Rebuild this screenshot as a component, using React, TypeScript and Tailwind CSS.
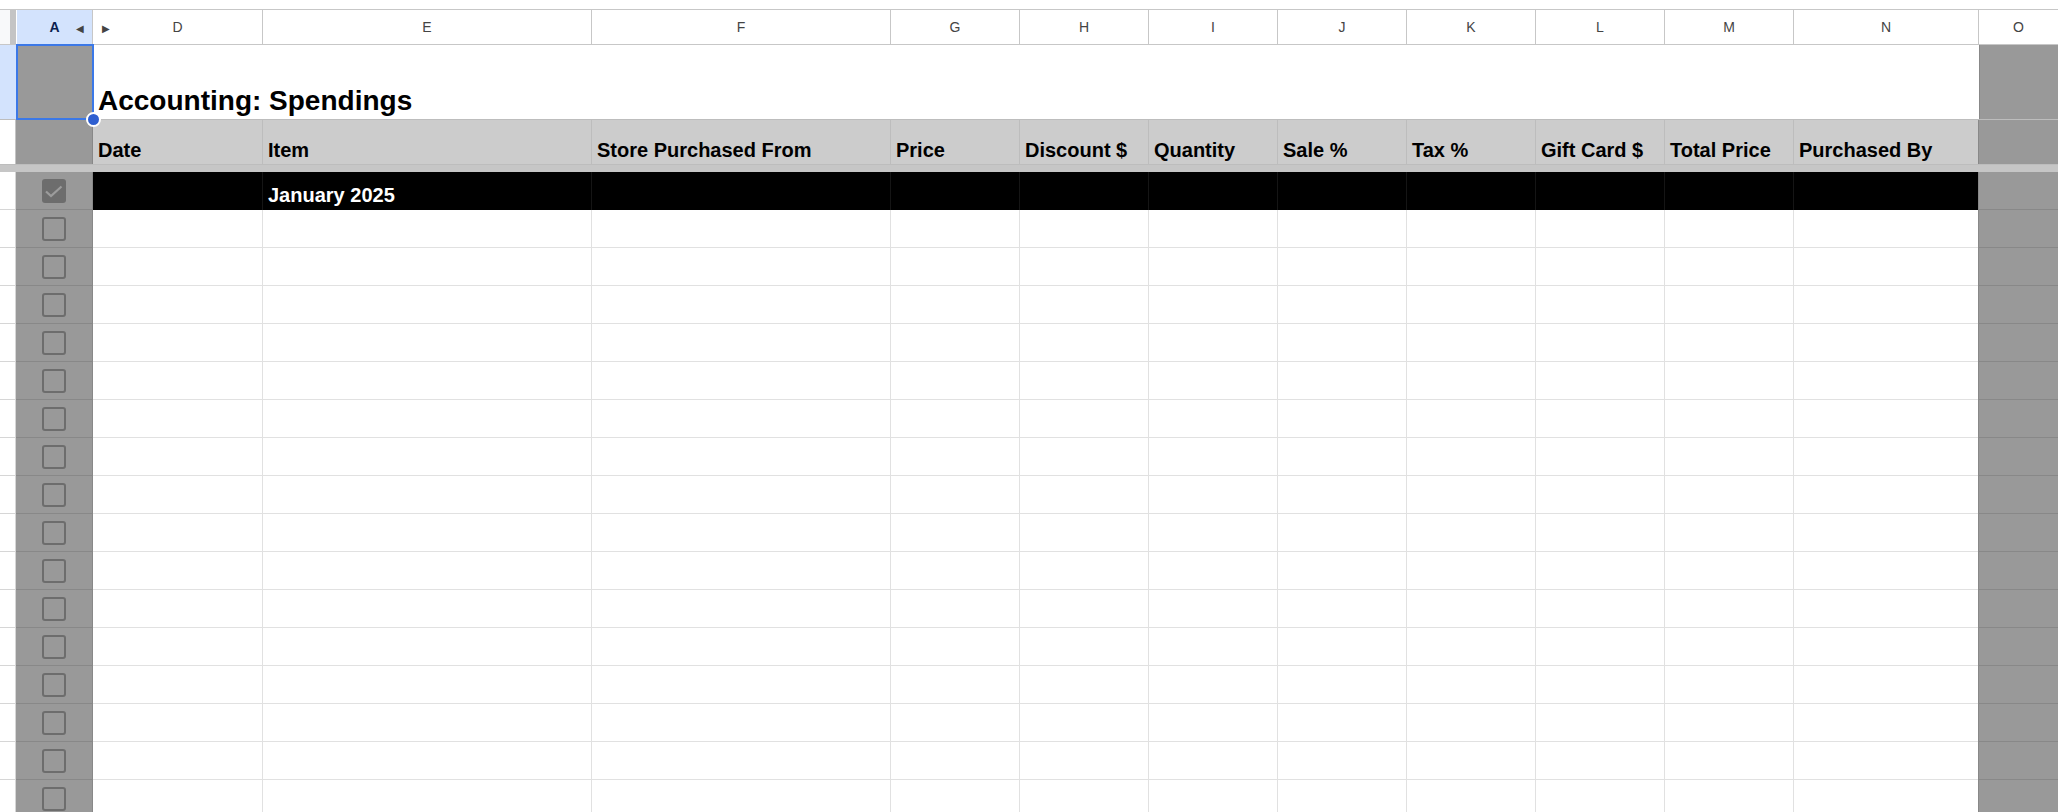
import React from "react";

const GRID =
    "grid grid-cols-[16px_77px_170px_329px_299px_129px_129px_129px_129px_129px_129px_129px_185px_79px]";

const LETTERS = ["D", "E", "F", "G", "H", "I", "J", "K", "L", "M", "N"];
const HEADERS = [
    "Date",
    "Item",
    "Store Purchased From",
    "Price",
    "Discount $",
    "Quantity",
    "Sale %",
    "Tax %",
    "Gift Card $",
    "Total Price",
    "Purchased By",
];

function Checkbox({ checked }: { checked?: boolean }) {
    if (checked) {
        return (
            <div className="w-[24px] h-[24px] rounded-[3px] bg-[#6d6d6d]">
                <svg width="24" height="24" viewBox="0 0 24 24">
                    <path d="M4 12.5 L9 17 L19.5 7.5" fill="none" stroke="#9c9c9c" strokeWidth="2.2" />
                </svg>
            </div>
        );
    }
    return <div className="w-[24px] h-[24px] rounded-[3px] border-2 border-[#6d6d6d]" />;
}

export default function App() {
    const rows = Array.from({ length: 17 }, (_, i) => i);

    return (
        <div className="w-[2058px] h-[812px] overflow-hidden bg-white font-['Liberation_Sans',Arial,sans-serif] text-black">
            {/* toolbar edge */}
            <div className="h-[10px] border-b border-[#c7c7c7] bg-white" />

            {/* column letters */}
            <div className={`${GRID} h-[35px] border-b border-[#c7c7c7]`}>
                <div className="flex">
                    <div className="w-[10px] bg-[#f8f9fa]" />
                    <div className="w-[6px] bg-[#c4c4c4]" />
                </div>
                <div className="relative flex items-center justify-center bg-[#d3e3fd] border-r border-[#c7c7c7] border-l border-l-white">
                    <span className="text-[14px] font-bold text-[#0b1f4f]">A</span>
                    <span className="absolute right-[8px] top-[11px] text-[10px] text-[#444]">◀</span>
                </div>
                {LETTERS.map((l, i) => (
                    <div key={l} className="relative flex items-center justify-center border-r border-[#c7c7c7] text-[14px] text-[#444]">
                        {i === 0 && <span className="absolute left-[9px] top-[11px] text-[10px] text-[#444]">▶</span>}
                        {l}
                    </div>
                ))}
                <div className="flex items-center justify-center text-[14px] text-[#444]">O</div>
            </div>

            {/* row 1 - title */}
            <div className={`${GRID} h-[75px] border-b border-[#bdbdbd]`}>
                <div className="bg-[#d3e3fd]" />
                <div className="relative bg-[#999999]">
                    <div className="absolute -top-[1px] left-0 right-[-1px] bottom-[-1px] border-2 border-[#3b78e7]" />
                    <div className="absolute -right-[8px] -bottom-[8px] w-[15px] h-[15px] rounded-full bg-[#2f5fd0] border-2 border-white z-10" />
                </div>
                <div className="col-span-11 flex items-end pl-[5px] pb-[2px]">
                    <span className="text-[28px] leading-[32px] font-bold whitespace-nowrap">Accounting: Spendings</span>
                </div>
                <div className="bg-[#999999] border-l border-[#888888]" />
            </div>

            {/* row 2 - headers */}
            <div className={`${GRID} h-[45px] border-b border-[#bdbdbd]`}>
                <div className="bg-white border-r border-[#c4c4c4]" />
                <div className="bg-[#999999] border-r border-[#888888]" />
                {HEADERS.map((h) => (
                    <div key={h} className="flex items-end bg-[#cccccc] border-r border-[#bdbdbd] pl-[5px] pb-[2px]">
                        <span className="text-[20px] leading-[23px] font-bold whitespace-nowrap">{h}</span>
                    </div>
                ))}
                <div className="bg-[#999999] border-l border-[#888888] -ml-[1px]" />
            </div>

            {/* frozen rows divider */}
            <div className="h-[7px] bg-[#c6c6c6]" />

            {/* data rows */}
            {rows.map((r) => {
                const month = r === 0;
                return (
                    <div key={r} className={`${GRID} h-[38px]`}>
                        <div className="bg-white border-b border-r border-[#d6d6d6]" />
                        <div className="flex items-center justify-center bg-[#999999] border-b border-r border-[#888888]">
                            <Checkbox checked={month} />
                        </div>
                        {LETTERS.map((l, i) =>
                            month ? (
                                <div key={l} className="flex items-end bg-black border-r border-[#151515] pl-[5px] pb-[3px]">
                                    {i === 1 && (
                                        <span className="text-[20px] leading-[23px] font-bold text-white whitespace-nowrap">January 2025</span>
                                    )}
                                </div>
                            ) : (
                                <div key={l} className="bg-white border-b border-r border-[#e1e1e1]" />
                            )
                        )}
                        <div className="bg-[#999999] border-b border-[#888888] border-l border-l-[#888888] -ml-[1px]" />
                    </div>
                );
            })}
        </div>
    );
}
